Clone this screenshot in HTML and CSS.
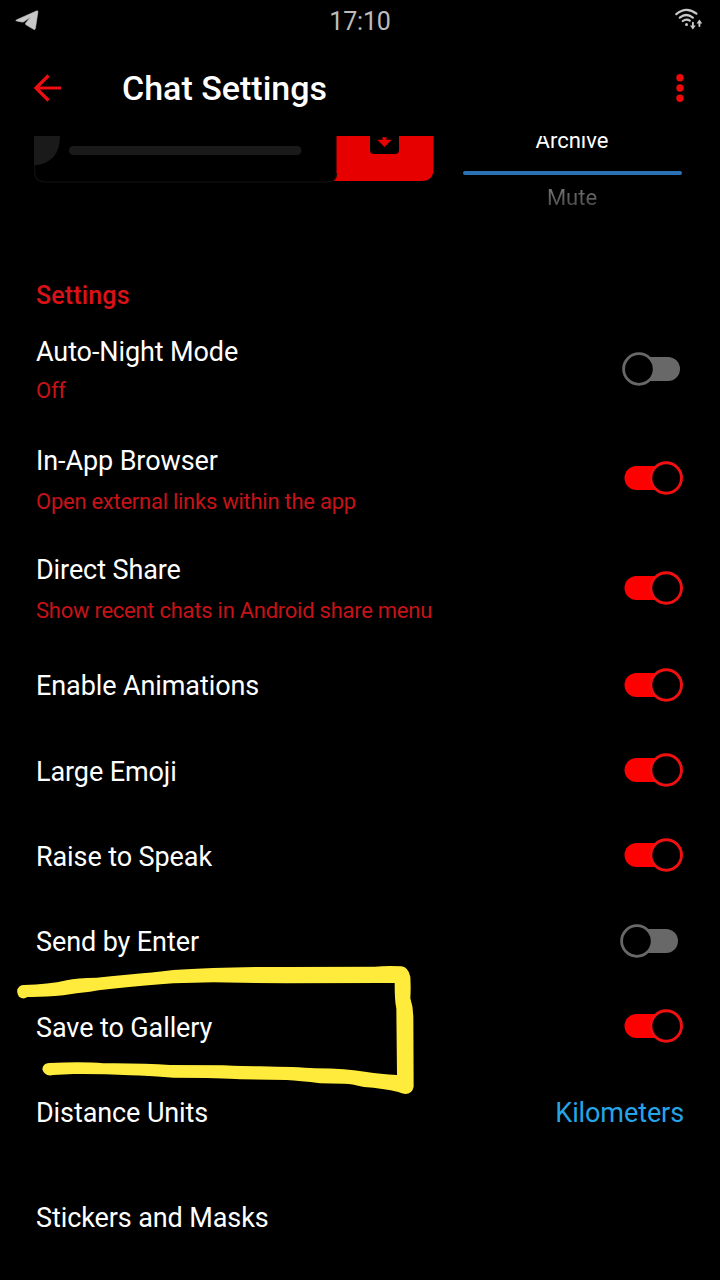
FILE: index.html
```html
<!DOCTYPE html>
<html lang="en">
<head>
<meta charset="utf-8">
<title>Chat Settings</title>
<link rel="stylesheet" href="styles.css">
</head>
<body>
<svg class="defs" width="0" height="0" aria-hidden="true">
  <symbol id="on" viewBox="0 0 60 36">
    <path d="M42 6H13.500a12 12 0 0 0 0 24H42z" fill="#fe0000"/>
    <circle cx="43.200" cy="18" r="15.300" fill="#000" stroke="#f01012" stroke-width="2.900"/>
  </symbol>
  <symbol id="off" viewBox="0 0 60 36">
    <path d="M20 6h26a12 12 0 0 1 0 24H20z" fill="#686868"/>
    <circle cx="16.900" cy="18" r="15.300" fill="#000" stroke="#686868" stroke-width="2.800"/>
  </symbol>
</svg>
<div class="screen">
  <div class="status">
    <svg class="plane" width="24" height="22" viewBox="0 0 24 22"><path d="M1.200 10 21.500.9q1.600-.5 1.400 1L20.400 18.500q-.4 1.600-1.800.8L11 14.800q-1.100-.8-.3-1.800l5-6-7 4.800q-.9.500-1.900.2l-5-1q-1.700-.5-.6-1z" fill="#c8c8c8" stroke="#c8c8c8" stroke-width=".6"/></svg>
    <span class="clock">17:10</span>
    <svg class="wifi" width="30" height="24" viewBox="0 0 30 24" fill="none" stroke="#c8c8c8" stroke-width="2.200" stroke-linecap="round">
      <path d="M3.300 7.200Q13.300-1.200 23.400 6.700M6.800 10.700q6.500-5.400 13 0M9.800 14q3.600-2.800 7-.3"/>
      <circle cx="13.500" cy="17.400" r="1.500" fill="#c8c8c8" stroke="none"/>
      <path d="M19.900 15.800v4.600M26.400 19v-4" stroke-width="1.900"/>
      <path d="M17 18.400h5.800L19.900 22.600zM23.500 16.600h5.800L26.400 12.600z" fill="#c8c8c8" stroke="none"/>
    </svg>
  </div>
  <header class="header">
    <svg class="back" width="30" height="30" viewBox="0 0 30 30" fill="none" stroke="#ee0d10" stroke-width="3.200"><path d="M28 15H2.500M15.500 2.500 3 15l12.500 12.500"/></svg>
    <h1 class="title">Chat Settings</h1>
    <svg class="more" width="10" height="30" viewBox="0 0 10 30" fill="#ee0a0c"><circle cx="5" cy="4.700" r="3.700"/><circle cx="5" cy="15" r="3.700"/><circle cx="5" cy="25.300" r="3.700"/></svg>
  </header>
  <main class="content">
    <section class="preview">
      <svg class="swipe" width="402" height="50" viewBox="0 0 402 50">
        <path d="M302.500 0h97v33q0 12-12 12h-89q4-3 4-10z" fill="#e60000"/>
        <path d="M.5 0v35q0 11 11 11h282q9 0 9-9" fill="none" stroke="#0d0d0d" stroke-width="1.500"/>
        <path d="M0 0h26q0 27-26 29.500z" fill="#1a1a1a"/>
        <rect x="35" y="10" width="232.500" height="9" rx="4.500" fill="#1a1a1a"/>
        <path d="M336 0h29v14q0 4-4 4h-21q-4 0-4-4z" fill="#000"/>
        <path d="M348.500 1.200h4v2.500h5.300l-7.300 7.300-7.300-7.300h5.300z" fill="#e60000"/>
      </svg>
      <div class="picker">
        <div class="picked">Archive</div>
        <div class="line"></div>
        <div class="next">Mute</div>
      </div>
    </section>
    <h2 class="heading">Settings</h2>
    <div class="row tall"><div class="text"><div class="name">Auto-Night Mode</div><div class="sub state">Off</div></div><svg class="switch night"><use href="#off"/></svg></div>
    <div class="row tall"><div class="text"><div class="name">In-App Browser</div><div class="sub">Open external links within the app</div></div><svg class="switch"><use href="#on"/></svg></div>
    <div class="row tall"><div class="text"><div class="name">Direct Share</div><div class="sub">Show recent chats in Android share menu</div></div><svg class="switch"><use href="#on"/></svg></div>
    <div class="row"><div class="name">Enable Animations</div><svg class="switch"><use href="#on"/></svg></div>
    <div class="row"><div class="name">Large Emoji</div><svg class="switch"><use href="#on"/></svg></div>
    <div class="row"><div class="name">Raise to Speak</div><svg class="switch"><use href="#on"/></svg></div>
    <div class="row"><div class="name">Send by Enter</div><svg class="switch plain"><use href="#off"/></svg></div>
    <div class="row"><div class="name">Save to Gallery</div><svg class="switch"><use href="#on"/></svg></div>
    <div class="row"><div class="name">Distance Units</div><div class="value">Kilometers</div></div>
    <div class="row apart"><div class="name">Stickers and Masks</div></div>
  </main>
  <svg class="marker" width="440" height="200" viewBox="0 0 1320 600" fill="#ffeb3b">
    <path d="M72 195Q145 194 200 181Q230 173 290 173Q330 168 380 164Q460 158 520 150Q570 147 640 144Q730 140 860 141L1125 140Q1160 137 1205 139Q1225 142 1231 170Q1233 205 1231 235Q1240 262 1240 290L1241 500Q1237 521 1216 522Q1205 521 1195 516Q1150 505 1092 501Q1050 490 1030 491L960 490Q900 482 860 480L720 478Q670 473 520 473Q440 467 390 466Q300 461 220 462L160 465Q134 471 127 448Q128 430 148 429Q250 424 310 430Q430 429 510 435L670 436Q740 439 780 439Q890 441 945 445Q1040 446 1100 456Q1140 462 1191 465L1189 265Q1184 245 1184 189L1140 189L860 190L640 187Q580 189 520 190Q440 196 380 202Q320 207 270 215Q230 218 190 226Q130 232 82 231Q70 240 57 230Q45 211 59 199Q64 195 72 195Z"/>
  </svg>
</div>
</body>
</html>
```
FILE: styles.css
```css
* { box-sizing: border-box; }
body { margin: 0; background: #000; color: #fff; font-family: Roboto, sans-serif; }
.defs { display: block; }
.screen { position: relative; width: 720px; height: 1280px; overflow: hidden; display: flex; flex-direction: column; }
.status { height: 43px; flex: none; display: grid; grid-template-columns: 1fr auto 1fr; align-items: start; padding: 7px 16px 0 16px; }
.plane { margin-top: 3px; margin-left: -1px; }
.clock { font-size: 25px; line-height: 29px; color: #bcbcbc; letter-spacing: -0.2px; }
.wifi { justify-self: end; margin-right: 1px; }
.header { height: 93px; flex: none; display: flex; align-items: center; padding: 0 35px 3px 33px; }
.title { margin: 0 auto 0 59px; font-size: 34px; line-height: 40px; font-weight: 500; }
.content { flex: 1; overflow: hidden; }
.preview { height: 144px; display: flex; padding-left: 34px; overflow: hidden; }
.swipe { flex: none; }
.picker { width: 219px; margin-left: 27px; text-align: center; font-size: 22px; line-height: 26px; }
.picked { margin-top: -8px; }
.line { height: 4px; margin-top: 17px; border-radius: 2px; background: #2b72b5; }
.next { margin-top: 10px; color: transparent; background: linear-gradient(#707070 20%, #484848 85%); background-clip: text; }
.picked, .next { padding-right: 1px; }
.heading { margin: 0; padding-left: 36px; height: 36px; font-size: 25px; line-height: 32px; font-weight: 500; letter-spacing: 0.15px; color: #d91217; }
.row { height: 85.333px; display: flex; align-items: center; justify-content: space-between; padding: 0 36px; }
.tall { height: 109.200px; }
.text { align-self: flex-start; padding-top: 20px; }
.name { font-size: 27px; line-height: 32px; letter-spacing: -0.1px; }
.sub { margin-top: 12px; font-size: 22px; line-height: 26px; letter-spacing: -0.260px; color: #c61318; }
.state { margin-top: 10px; }
.switch { width: 60px; height: 36px; flex: none; margin: 0 1px 2.800px 0; }
.night { margin-right: 2px; }
.plain { margin-right: 4px; }
.value { font-size: 27px; line-height: 32px; letter-spacing: -0.1px; color: #25a5e8; }
.apart { margin-top: 20px; }
.marker { position: absolute; left: 0; top: 920px; }
```
